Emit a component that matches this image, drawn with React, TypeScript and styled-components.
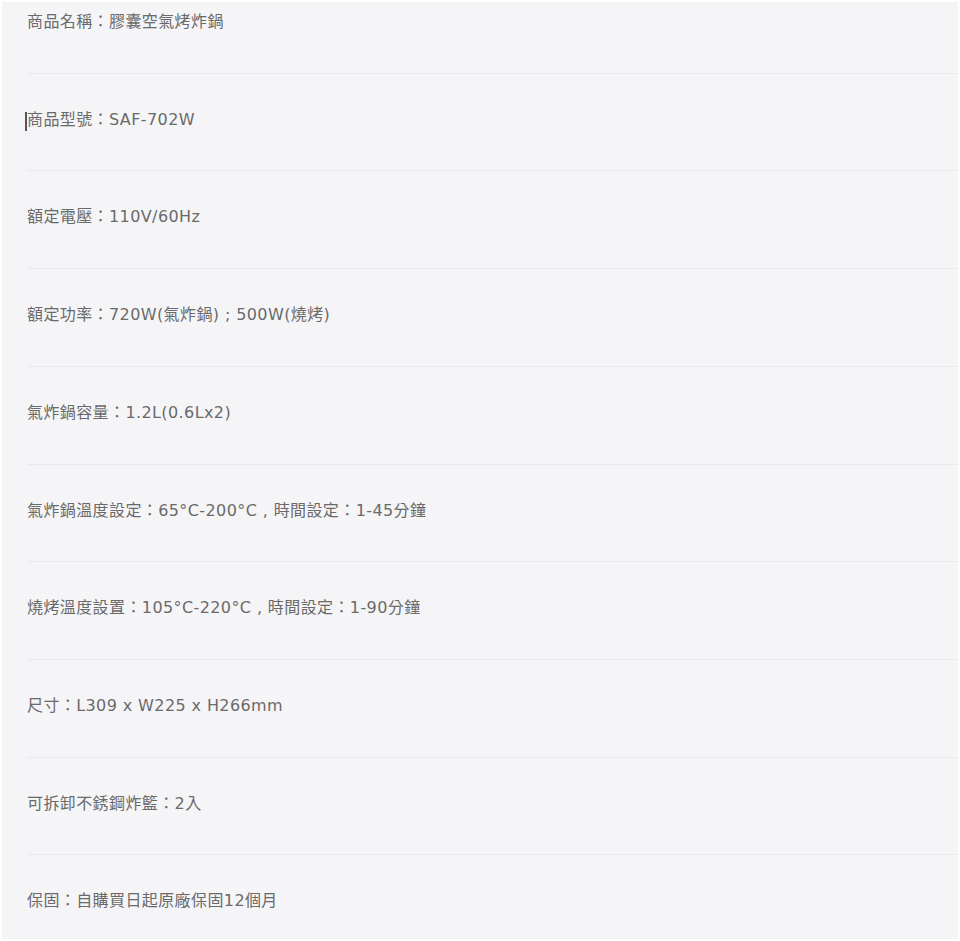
import React from "react";
import styled, { createGlobalStyle } from "styled-components";

const GlobalStyle = createGlobalStyle`
  html, body {
    margin: 0;
    padding: 0;
    background: #ffffff;
  }
`;

const Panel = styled.div`
  margin: 2px;
  height: calc(100vh - 4px);
  box-sizing: border-box;
  background: #f5f5f7;
  padding-left: 25px;
  overflow: hidden;
`;

const SpecList = styled.ul`
  list-style: none;
  margin: 0;
  padding: 0;
`;

const SpecRow = styled.li`
  padding: 34px 0 39px;
  border-bottom: 1px solid #eaeaec;
  font-family: "DejaVu Sans", "Noto Sans CJK TC", sans-serif;
  font-size: 16px;
  line-height: 23.7px;
  letter-spacing: 0.4px;
  color: #6a6a6a;
  white-space: nowrap;
  position: relative;

  &:first-child {
    padding-top: 8px;
  }

  &:last-child {
    border-bottom: none;
  }
`;

const Caret = styled.span`
  position: absolute;
  left: -2px;
  top: 50%;
  margin-top: -10px;
  width: 2px;
  height: 19px;
  background: #555555;
`;

interface ISpec {
  text: string;
  focused?: boolean;
}

const specs: ISpec[] = [
  { text: "商品名稱：膠囊空氣烤炸鍋" },
  { text: "商品型號：SAF-702W", focused: true },
  { text: "額定電壓：110V/60Hz" },
  { text: "額定功率：720W(氣炸鍋) ; 500W(燒烤)" },
  { text: "氣炸鍋容量：1.2L(0.6Lx2)" },
  { text: "氣炸鍋溫度設定：65°C-200°C , 時間設定：1-45分鐘" },
  { text: "燒烤溫度設置：105°C-220°C , 時間設定：1-90分鐘" },
  { text: "尺寸：L309 x W225 x H266mm" },
  { text: "可拆卸不銹鋼炸籃：2入" },
  { text: "保固：自購買日起原廠保固12個月" },
];

function App() {
  return (
    <>
      <GlobalStyle />
      <Panel>
        <SpecList>
          {specs.map((spec) => (
            <SpecRow key={spec.text}>
              {spec.focused && <Caret />}
              {spec.text}
            </SpecRow>
          ))}
        </SpecList>
      </Panel>
    </>
  );
}

export default App;
